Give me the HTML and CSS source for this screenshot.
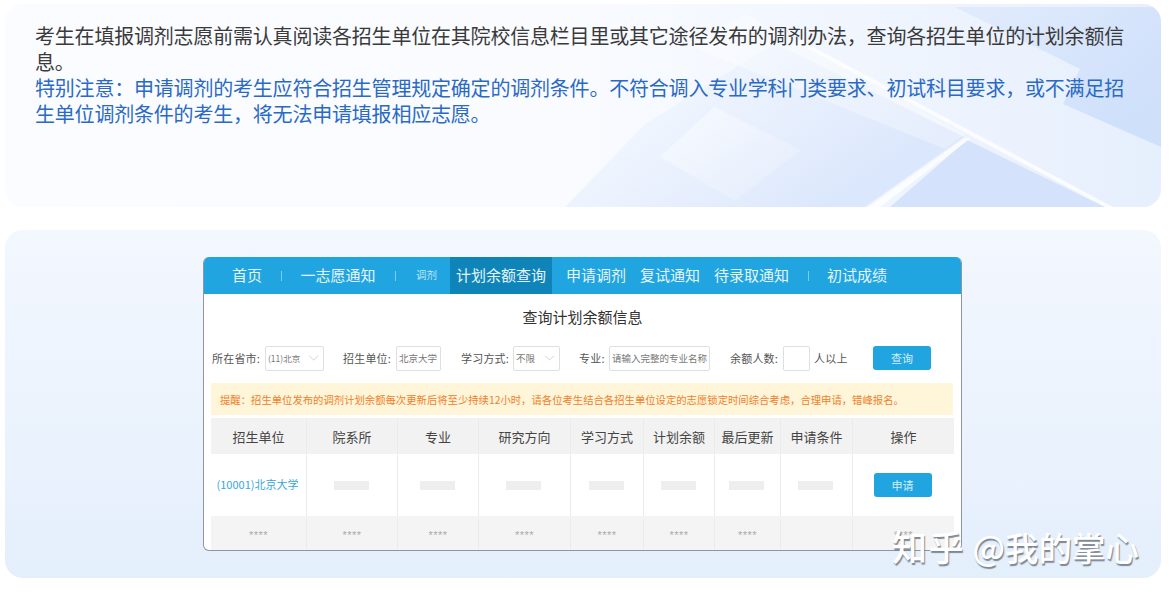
FILE: index.html
```html
<!DOCTYPE html>
<html lang="zh-CN">
<head>
<meta charset="utf-8">
<title>调剂</title>
<link rel="stylesheet" href="styles.css">
</head>
<body>
<section class="notice">
  <svg class="notice-bg" viewBox="0 0 1156 203" preserveAspectRatio="none" aria-hidden="true">
    <defs>
      <linearGradient id="g1" x1="0" y1="0" x2="1" y2="0">
        <stop offset="0" stop-color="#fafcff"/>
        <stop offset="0.5" stop-color="#f9fbff"/>
        <stop offset="0.8" stop-color="#eef4fe"/>
        <stop offset="1" stop-color="#e6effd"/>
      </linearGradient>
      <linearGradient id="g2" x1="0" y1="0" x2="1" y2="1">
        <stop offset="0" stop-color="#ffffff" stop-opacity=".45"/>
        <stop offset="1" stop-color="#ffffff" stop-opacity=".1"/>
      </linearGradient>
      <linearGradient id="g3" x1="0.1" y1="0.1" x2="0.9" y2="0.6">
        <stop offset="0" stop-color="#eef4fe" stop-opacity=".3"/>
        <stop offset="1" stop-color="#dbe7fc"/>
      </linearGradient>
      <linearGradient id="g4" x1="0.2" y1="0" x2="1" y2="0.6">
        <stop offset="0" stop-color="#dfeafc"/>
        <stop offset="1" stop-color="#cfe0fb"/>
      </linearGradient>
    </defs>
    <rect width="1156" height="203" fill="url(#g1)"/>
    <polygon points="770,39 959,133 860,203 668,203 560,203 640,120" fill="url(#g3)"/>
    <polygon points="950,3 1156,3 1156,143 1058,100 1075,65" fill="url(#g4)"/>
    <polygon points="962,136 1100,203 885,203" fill="#d4e3fb"/>
    <polygon points="655,153 709,103 796,146 730,197" fill="url(#g2)"/>
    <polygon points="680,40 740,10 960,130 940,145" fill="#ffffff" opacity=".3"/>
    <polygon points="790,38 1100,203 1108,203 795,36" fill="#ffffff" opacity=".75"/>
    <polygon points="863,203 960,134 966,134 875,203" fill="#ffffff" opacity=".75"/>
  </svg>
  <p class="notice-text">考生在填报调剂志愿前需认真阅读各招生单位在其院校信息栏目里或其它途径发布的调剂办法，查询各招生单位的计划余额信息。<br><span class="notice-blue">特别注意：申请调剂的考生应符合招生管理规定确定的调剂条件。不符合调入专业学科门类要求、初试科目要求，或不满足招生单位调剂条件的考生，将无法申请填报相应志愿。</span></p>
</section>

<section class="stage">
  <div class="app">
    <nav class="nav">
      <a class="nav-item w-home">首页</a><i class="sep"></i>
      <a class="nav-item w-one">一志愿通知</a><i class="sep"></i>
      <a class="nav-item nav-small">调剂</a>
      <a class="nav-item nav-active">计划余额查询</a>
      <a class="nav-item w-apply">申请调剂</a>
      <a class="nav-item w-re">复试通知</a>
      <a class="nav-item w-wait">待录取通知</a><i class="sep"></i>
      <a class="nav-item w-score">初试成绩</a>
    </nav>
    <h2 class="title">查询计划余额信息</h2>
    <div class="filters">
      <span class="lab">所在省市:</span>
      <span class="field select s-prov">(11)北京<svg class="chev" viewBox="0 0 12 7"><path d="M1 1l5 5 5-5"/></svg></span>
      <span class="lab l-unit">招生单位:</span>
      <span class="field s-unit">北京大学</span>
      <span class="lab l-mode">学习方式:</span>
      <span class="field select s-mode">不限<svg class="chev" viewBox="0 0 12 7"><path d="M1 1l5 5 5-5"/></svg></span>
      <span class="lab l-major">专业:</span>
      <span class="field s-major">请输入完整的专业名称</span>
      <span class="lab l-num">余额人数:</span>
      <span class="field s-num"></span>
      <span class="lab l-up">人以上</span>
      <button class="btn b-query">查询</button>
    </div>
    <div class="tip">提醒：招生单位发布的调剂计划余额每次更新后将至少持续12小时，请各位考生结合各招生单位设定的志愿锁定时间综合考虑，合理申请，错峰报名。</div>
    <div class="table">
      <div class="row head">
        <div>招生单位</div><div>院系所</div><div>专业</div><div>研究方向</div><div>学习方式</div><div>计划余额</div><div>最后更新</div><div>申请条件</div><div>操作</div>
      </div>
      <div class="row body">
        <div class="link">(10001)北京大学</div>
        <div><i class="ph"></i></div><div><i class="ph"></i></div><div><i class="ph"></i></div>
        <div><i class="ph"></i></div><div><i class="ph"></i></div><div><i class="ph"></i></div><div><i class="ph"></i></div>
        <div><button class="btn">申请</button></div>
      </div>
      <div class="row stars">
        <div>****</div><div>****</div><div>****</div><div>****</div><div>****</div><div>****</div><div>****</div><div></div><div>****</div>
      </div>
    </div>
  </div>
  <div class="mark"><span class="mark-brand">知乎</span> @我的掌心</div>
</section>
</body>
</html>
```
FILE: styles.css
```css
* { box-sizing: border-box; }
html, body { margin: 0; padding: 0; }
body {
  width: 1169px;
  height: 595px;
  overflow: hidden;
  padding: 4px 8px 0 5px;
  background: #fff;
  font-family: "Noto Sans CJK SC", "Noto Sans", sans-serif;
}
.notice {
  position: relative;
  height: 203px;
  border-radius: 18px;
  overflow: hidden;
  padding: 19px 30px 0;
}
.notice-bg { position: absolute; inset: 0; width: 100%; height: 100%; }
.notice-text {
  position: relative;
  margin: 0;
  font-size: 20px;
  line-height: 26px;
  color: #3a3a3a;
  letter-spacing: -0.2px;
}
.notice-blue { color: #2a6ac4; }
.stage {
  position: relative;
  margin-top: 23px;
  height: 348px;
  border-radius: 18px;
  background: linear-gradient(180deg, #f3f7fe 0%, #e4effc 100%);
  padding: 27px 0 0 198px;
}
.app {
  width: 759px;
  height: 294px;
  background: #fff;
  border: 1px solid #8e96a3;
  border-top: 0;
  border-radius: 6px;
  overflow: hidden;
}
.nav {
  display: flex;
  align-items: center;
  height: 37px;
  background: #20a5e0;
  color: #e6f5fd;
  font-size: 15px;
}
.nav-item { display: block; text-align: center; line-height: 36px; height: 37px; white-space: nowrap; }
.w-home { margin-left: 28px; width: 30px; }
.w-one { margin-left: 18px; width: 76px; }
.nav-small { margin-left: 19px; width: 23px; font-size: 10.5px; color: #bfe5f8; }
.nav-active { margin-left: 12px; width: 102px; background: #0f84b9; }
.w-apply { margin-left: 14px; width: 60px; }
.w-re { margin-left: 14px; width: 60px; }
.w-wait { margin-left: 14px; width: 75px; }
.w-score { margin-left: 18px; width: 60px; }
.sep { display: block; width: 1px; height: 10px; margin-left: 19px; background: #7fcbee; }
.title {
  margin: 0;
  height: 45px;
  line-height: 45px;
  text-align: center;
  font-size: 15px;
  font-weight: 400;
  color: #333;
}
.filters {
  display: flex;
  align-items: center;
  height: 28px;
  margin: 5px 0 0 8px;
  font-size: 11px;
  color: #555;
}
.lab { width: 48px; white-space: nowrap; letter-spacing: .2px; }
.field {
  display: flex;
  align-items: center;
  justify-content: space-between;
  height: 25px;
  margin-left: 5px;
  padding: 0 2px;
  background: #fff;
  border: 1px solid #dcdfe4;
  border-radius: 2px;
  font-size: 9.5px;
  color: #777;
  white-space: nowrap;
}
.chev { width: 11px; height: 6px; margin-right: 2px; fill: none; stroke: #c8ccd2; stroke-width: 1; }
.s-prov { width: 59px; font-size: 8.5px; }
.l-unit { margin-left: 19px; }
.s-unit { width: 45px; }
.l-mode { margin-left: 20px; }
.s-mode { width: 47px; margin-left: 4px; }
.l-major { margin-left: 19px; width: 26px; }
.s-major { width: 101px; margin-left: 4px; }
.l-num { margin-left: 20px; }
.s-num { width: 27px; }
.l-up { margin-left: 4px; width: 33px; }
.btn {
  display: block;
  width: 58px;
  height: 24px;
  padding: 0;
  border: 0;
  border-radius: 3px;
  background: #20a5e0;
  color: #d5effb;
  font: 11px "Noto Sans CJK SC", sans-serif;
}
.b-query { margin-left: 26px; }
.tip {
  height: 32px;
  margin: 11px 8px 3px 7px;
  padding-left: 9px;
  line-height: 34px;
  background: #fff5d9;
  color: #f0802a;
  font-size: 10.35px;
  white-space: nowrap;
}
.table { margin: 0 7px; }
.row {
  display: grid;
  grid-template-columns: 95px 91px 81px 92px 73px 71px 66px 72px 102px;
}
.row > div {
  display: flex;
  align-items: center;
  justify-content: center;
  border-left: 1px solid #ebebeb;
}
.row > div:first-child { border-left: 0; }
.head { height: 36px; background: #f2f2f2; font-size: 13px; color: #444; }
.body { height: 62px; }
.body > div { padding-right: 2px; }
.stars {
  height: 34px;
  background: #f4f4f4;
  padding-top: 3px;
  font: 11px "Liberation Sans", sans-serif;
  color: #aaa;
  letter-spacing: .5px;
}
.link { color: #3aa6da; font-size: 11px; padding-bottom: 3px; white-space: nowrap; }
.ph { display: block; width: 35px; height: 9px; background: #eeeeee; }
.mark {
  position: absolute;
  right: 22px;
  bottom: 9px;
  font-size: 33.5px;
  font-weight: 500;
  line-height: 44px;
  color: #fff;
  text-shadow: 1px 2px 1px rgba(90, 100, 115, .75);
  white-space: nowrap;
}
.mark-brand { font-size: 35px; letter-spacing: 1.5px; }
```
